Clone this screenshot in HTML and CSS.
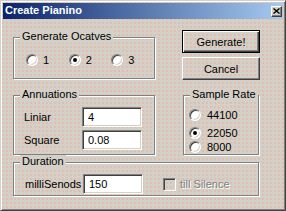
FILE: index.html
```html
<!DOCTYPE html>
<html lang="en">
<head>
    <meta charset="UTF-8">
    <title>Create Pianino</title>
    <link rel="stylesheet" href="styles.css">
</head>
<body>
    <div class="window">
        <div class="titlebar">
            <span class="title">Create Pianino</span>
            <span class="close-btn">
                <svg width="7" height="6" viewBox="0 0 7 6"><path d="M0.5 0.5 L6.5 5.5 M6.5 0.5 L0.5 5.5" stroke="#000" stroke-width="1.4" fill="none"/></svg>
            </span>
        </div>

        <div class="client">
            <div class="row row-top">
                <div class="group group-octaves">
                    <div class="legend">Generate Ocatves</div>
                    <div class="octave-row">
                        <label class="opt octave-opt"><span class="radio"></span>1</label>
                        <label class="opt octave-opt"><span class="radio checked"></span>2</label>
                        <label class="opt octave-opt"><span class="radio"></span>3</label>
                    </div>
                </div>
                <div class="buttons">
                    <button class="btn btn-default">Generate!</button>
                    <button class="btn">Cancel</button>
                </div>
            </div>

            <div class="row row-mid">
                <div class="group group-annuations">
                    <div class="legend">Annuations</div>
                    <div class="field-row">
                        <span class="field-label">Liniar</span>
                        <input class="input" type="text" value="4">
                    </div>
                    <div class="field-row field-row-2">
                        <span class="field-label">Square</span>
                        <input class="input" type="text" value="0.08">
                    </div>
                </div>
                <div class="group group-rate">
                    <div class="legend">Sample Rate</div>
                    <label class="opt rate-opt"><span class="radio"></span>44100</label>
                    <label class="opt rate-opt"><span class="radio checked"></span>22050</label>
                    <label class="opt rate-opt"><span class="radio"></span>8000</label>
                </div>
            </div>

            <div class="row row-bottom">
                <div class="group group-duration">
                    <div class="legend">Duration</div>
                    <div class="field-row duration-row">
                        <span class="field-label">milliSenods</span>
                        <input class="input" type="text" value="150">
                        <span class="checkbox"></span>
                        <span class="disabled-text">till Silence</span>
                    </div>
                </div>
            </div>
        </div>
    </div>
</body>
</html>
```

FILE: styles.css
```css
body {
    margin: 0;
    font-family: "Liberation Sans", Arial, sans-serif;
    font-size: 11px;
    color: #000;
}
.window {
    width: 286px;
    height: 211px;
    box-sizing: border-box;
    border: 1px solid;
    border-color: #d4d0c8 #404040 #404040 #d4d0c8;
    box-shadow: inset 1px 1px #fff, inset -1px -1px #808080;
    padding: 2px;
    background-color: #d4d0c8;
    background-image: radial-gradient(circle, rgba(235, 165, 140, 0.5) 0.6px, transparent 1px);
    background-size: 4px 4px;
}
.titlebar {
    height: 16px;
    display: flex;
    align-items: center;
    justify-content: space-between;
    padding: 0 1px 0 2px;
    background: linear-gradient(to right, #0a246a, #a6caf0);
    color: #fff;
    font-weight: bold;
}
.title {
    line-height: 16px;
    margin-top: -2px;
}
.close-btn {
    width: 11px;
    height: 11px;
    box-sizing: border-box;
    background: #d4d0c8;
    border: 1px solid;
    border-color: #fff #404040 #404040 #fff;
    box-shadow: inset -1px -1px #808080;
    display: flex;
    align-items: center;
    justify-content: center;
}
.close-btn svg {
    display: block;
}
.client {
    padding: 11px 0 0 10px;
}
.row {
    display: flex;
    align-items: flex-start;
}
.row-mid {
    margin-top: 15px;
}
.row-bottom {
    margin-top: 7px;
}

/* group boxes */
.group {
    box-sizing: border-box;
    border: 1px solid #808080;
    box-shadow: inset 1px 1px #fff, 1px 1px #fff;
}
.legend {
    width: fit-content;
    margin: -8px 0 0 6px;
    padding: 0 2px;
    line-height: 13px;
    background: #d4d0c8;
}
.group-octaves {
    width: 142px;
    height: 42px;
    margin-top: 7px;
}
.group-annuations {
    width: 142px;
    height: 60px;
}
.group-rate {
    width: 76px;
    height: 60px;
    margin-left: 28px;
}
.group-duration {
    width: 246px;
    height: 34px;
}

/* radios */
.opt {
    display: flex;
    align-items: center;
    height: 13px;
    gap: 5px;
}
.radio {
    width: 12px;
    height: 12px;
    box-sizing: border-box;
    border-radius: 50%;
    border: 1px solid;
    border-color: #808080 #fff #fff #808080;
    box-shadow: inset 1px 1px #404040, inset -1px -1px #d4d0c8;
    background: #fff;
    display: flex;
    align-items: center;
    justify-content: center;
}
.radio.checked::after {
    content: "";
    width: 4px;
    height: 4px;
    border-radius: 50%;
    background: #000;
}
.octave-row {
    display: flex;
    margin-top: 10px;
    padding-left: 12px;
}
.octave-opt {
    width: 43px;
}
.rate-opt {
    padding-left: 5px;
    gap: 6px;
    margin-top: 5px;
}
.rate-opt:nth-of-type(1) {
    margin-top: 7px;
}
.rate-opt:nth-of-type(3) {
    margin-top: 1px;
}

/* buttons */
.buttons {
    display: flex;
    flex-direction: column;
    gap: 4px;
    margin-left: 27px;
}
.btn {
    width: 78px;
    height: 23px;
    box-sizing: border-box;
    font: inherit;
    color: #000;
    background: transparent;
    border: 1px solid;
    border-color: #fff #404040 #404040 #fff;
    box-shadow: inset -1px -1px #808080;
    padding: 0;
}
.btn-default {
    border: 1px solid #000;
    box-shadow: inset 1px 1px #fff, inset -1px -1px #404040, inset -2px -2px #808080;
}

/* text fields */
.field-row {
    display: flex;
    align-items: center;
    margin-top: 6px;
    padding-left: 10px;
}
.field-row-2 {
    margin-top: 3px;
}
.duration-row {
    padding-left: 11px;
}
.field-label {
    width: 58px;
}
.input {
    width: 60px;
    height: 20px;
    box-sizing: border-box;
    font: inherit;
    color: #000;
    border: 1px solid;
    border-color: #808080 #fff #fff #808080;
    box-shadow: inset 1px 1px #404040, inset -1px -1px #d4d0c8;
    background: #fff;
    padding: 0 0 0 5px;
    outline: none;
}
.checkbox {
    width: 13px;
    height: 13px;
    box-sizing: border-box;
    margin-left: 20px;
    border: 1px solid;
    border-color: #808080 #fff #fff #808080;
    box-shadow: inset 1px 1px #404040, inset -1px -1px #d4d0c8;
}
.disabled-text {
    margin-left: 4px;
    color: #808080;
    text-shadow: 1px 1px #fff;
}
```
